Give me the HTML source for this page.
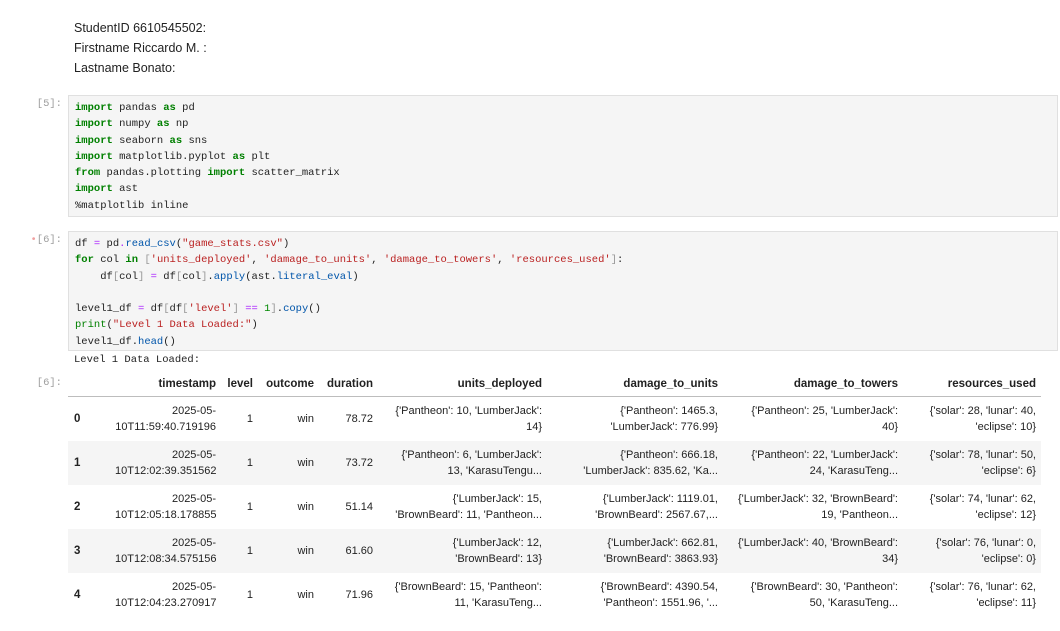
<!DOCTYPE html>
<html><head><meta charset="utf-8"><style>
body{margin:0;width:1060px;height:631px;background:#fff;overflow:hidden;position:relative;font-family:"Liberation Sans",Arial,sans-serif;}
.md{position:absolute;left:74px;top:18px;font-size:12.5px;line-height:20px;color:#222;}
.prompt{position:absolute;font-family:"Liberation Mono",monospace;font-size:10.5px;color:#9e9e9e;text-align:right;width:62px;left:0;}
.cell{position:absolute;left:68px;width:988px;background:#f5f5f5;border:1px solid #e0e0e0;}
pre{margin:0;padding:4px 6px;font-family:"Liberation Mono",monospace;font-size:10.5px;line-height:16.3px;color:#222;}
.k{color:#008000;font-weight:bold}.s{color:#ba2121}.f{color:#0055aa}.o{color:#aa22ff}.p{color:#999}
.out{position:absolute;left:74px;top:354px;font-family:"Liberation Mono",monospace;font-size:10.5px;color:#222;}
table{position:absolute;left:68px;top:372px;width:973px;border-collapse:collapse;font-size:11px;color:#222;table-layout:fixed;}
th,td{text-align:right;padding:0 5px;line-height:16px;white-space:nowrap;overflow:hidden;}
th{font-weight:bold;font-size:11.5px;height:24px;border-bottom:1px solid #bdbdbd;vertical-align:middle}
td{height:44px;vertical-align:middle}
tr.odd td{background:#f5f5f5}
td.i{text-align:left;font-weight:bold;padding-left:6px;font-size:11.5px}
</style></head><body>
<div class="md">StudentID 6610545502:<br>Firstname Riccardo M. :<br>Lastname Bonato:</div>
<div class="prompt" style="top:98px">[5]:</div>
<div class="cell" style="top:95px;height:120px"><pre><span class="k">import</span> pandas <span class="k">as</span> pd
<span class="k">import</span> numpy <span class="k">as</span> np
<span class="k">import</span> seaborn <span class="k">as</span> sns
<span class="k">import</span> matplotlib.pyplot <span class="k">as</span> plt
<span class="k">from</span> pandas.plotting <span class="k">import</span> scatter_matrix
<span class="k">import</span> ast
%matplotlib inline</pre></div>
<div class="prompt" style="top:234px"><span style="color:#f0a0a0">•</span>[6]:</div>
<div class="cell" style="top:231px;height:118px"><pre>df <span class="o">=</span> pd<span class="o">.</span><span class="f">read_csv</span>(<span class="s">"game_stats.csv"</span>)
<span class="k">for</span> col <span class="k">in</span> <span class="p">[</span><span class="s">'units_deployed'</span>, <span class="s">'damage_to_units'</span>, <span class="s">'damage_to_towers'</span>, <span class="s">'resources_used'</span><span class="p">]</span>:
    df<span class="p">[</span>col<span class="p">]</span> <span class="o">=</span> df<span class="p">[</span>col<span class="p">]</span>.<span class="f">apply</span>(ast.<span class="f">literal_eval</span>)

level1_df <span class="o">=</span> df<span class="p">[</span>df<span class="p">[</span><span class="s">'level'</span><span class="p">]</span> <span class="o">==</span> <span style="color:#080">1</span><span class="p">]</span>.<span class="f">copy</span>()
<span class="k" style="font-weight:normal">print</span>(<span class="s">"Level 1 Data Loaded:"</span>)
level1_df.<span class="f">head</span>()</pre></div>
<div class="out">Level 1 Data Loaded:</div>
<div class="prompt" style="top:377px">[6]:</div>
<table>
<colgroup><col style="width:42px"><col style="width:111px"><col style="width:37px"><col style="width:61px"><col style="width:59px"><col style="width:169px"><col style="width:176px"><col style="width:180px"><col style="width:138px"></colgroup>
<tr><th></th><th>timestamp</th><th>level</th><th>outcome</th><th>duration</th><th>units_deployed</th><th>damage_to_units</th><th>damage_to_towers</th><th>resources_used</th></tr>
<tr><td class="i">0</td><td>2025-05-<br>10T11:59:40.719196</td><td>1</td><td>win</td><td>78.72</td><td>{'Pantheon': 10, 'LumberJack':<br>14}</td><td>{'Pantheon': 1465.3,<br>'LumberJack': 776.99}</td><td>{'Pantheon': 25, 'LumberJack':<br>40}</td><td>{'solar': 28, 'lunar': 40,<br>'eclipse': 10}</td></tr>
<tr class="odd"><td class="i">1</td><td>2025-05-<br>10T12:02:39.351562</td><td>1</td><td>win</td><td>73.72</td><td>{'Pantheon': 6, 'LumberJack':<br>13, 'KarasuTengu...</td><td>{'Pantheon': 666.18,<br>'LumberJack': 835.62, 'Ka...</td><td>{'Pantheon': 22, 'LumberJack':<br>24, 'KarasuTeng...</td><td>{'solar': 78, 'lunar': 50,<br>'eclipse': 6}</td></tr>
<tr><td class="i">2</td><td>2025-05-<br>10T12:05:18.178855</td><td>1</td><td>win</td><td>51.14</td><td>{'LumberJack': 15,<br>'BrownBeard': 11, 'Pantheon...</td><td>{'LumberJack': 1119.01,<br>'BrownBeard': 2567.67,...</td><td>{'LumberJack': 32, 'BrownBeard':<br>19, 'Pantheon...</td><td>{'solar': 74, 'lunar': 62,<br>'eclipse': 12}</td></tr>
<tr class="odd"><td class="i">3</td><td>2025-05-<br>10T12:08:34.575156</td><td>1</td><td>win</td><td>61.60</td><td>{'LumberJack': 12,<br>'BrownBeard': 13}</td><td>{'LumberJack': 662.81,<br>'BrownBeard': 3863.93}</td><td>{'LumberJack': 40, 'BrownBeard':<br>34}</td><td>{'solar': 76, 'lunar': 0,<br>'eclipse': 0}</td></tr>
<tr><td class="i">4</td><td>2025-05-<br>10T12:04:23.270917</td><td>1</td><td>win</td><td>71.96</td><td>{'BrownBeard': 15, 'Pantheon':<br>11, 'KarasuTeng...</td><td>{'BrownBeard': 4390.54,<br>'Pantheon': 1551.96, '...</td><td>{'BrownBeard': 30, 'Pantheon':<br>50, 'KarasuTeng...</td><td>{'solar': 76, 'lunar': 62,<br>'eclipse': 11}</td></tr>
</table>
</body></html>
